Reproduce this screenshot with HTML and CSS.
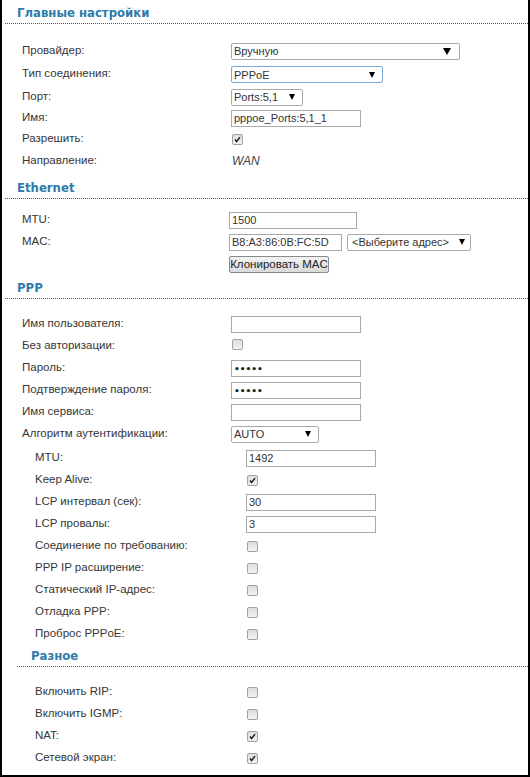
FILE: index.html
```html
<!DOCTYPE html>
<html lang="ru">
<head>
<meta charset="utf-8">
<title>Главные настройки</title>
<link rel="stylesheet" href="styles.css">
</head>
<body>
<div class="frame">
  <h2 class="title">Главные настройки</h2>
  <div class="sec sec-main">
    <div class="row r24"><span class="lbl">Провайдер:</span><div class="sel w229 sel-big"><span>Вручную</span><i class="arr arr-big"></i></div></div>
    <div class="row r23"><span class="lbl">Тип соединения:</span><div class="sel w152 focus"><span>PPPoE</span><i class="arr"></i></div></div>
    <div class="row"><span class="lbl">Порт:</span><div class="sel w72"><span>Ports:5,1</span><i class="arr"></i></div></div>
    <div class="row r21"><span class="lbl">Имя:</span><div class="inp w130">pppoe_Ports:5,1_1</div></div>
    <div class="row r21"><span class="lbl">Разрешить:</span><span class="cb"><svg viewBox="0 0 11 11" class="chk"><path d="M2.3 5.6 L4.4 7.9 L8.6 2.6"/></svg></span></div>
    <div class="row"><span class="lbl">Направление:</span><span class="wan">WAN</span></div>
  </div>

  <h2 class="title">Ethernet</h2>
  <div class="sec sec-eth">
    <div class="row"><span class="lbl">MTU:</span><div class="inp w128">1500</div></div>
    <div class="row"><span class="lbl">MAC:</span><div class="pair"><div class="inp w113">B8:A3:86:0B:FC:5D</div><div class="sel w124 sel-mac"><span>&lt;Выберите адрес&gt;</span><i class="arr"></i></div></div></div>
    <div class="row r23"><span class="lbl"></span><button class="btn" type="button">Клонировать MAC</button></div>
  </div>

  <h2 class="title">PPP</h2>
  <div class="sec sec-ppp">
    <div class="row"><span class="lbl">Имя пользователя:</span><div class="inp w130"></div></div>
    <div class="row"><span class="lbl">Без авторизации:</span><span class="cb up"></span></div>
    <div class="row"><span class="lbl">Пароль:</span><div class="inp w130"><span class="pw">•••••</span></div></div>
    <div class="row"><span class="lbl">Подтверждение пароля:</span><div class="inp w130"><span class="pw">•••••</span></div></div>
    <div class="row"><span class="lbl">Имя сервиса:</span><div class="inp w130"></div></div>
    <div class="row"><span class="lbl">Алгоритм аутентификации:</span><div class="sel w87"><span>AUTO</span><i class="arr"></i></div></div>

    <div class="sub">
      <div class="row"><span class="lbl">MTU:</span><div class="inp w130">1492</div></div>
      <div class="row"><span class="lbl">Keep Alive:</span><span class="cb"><svg viewBox="0 0 11 11" class="chk"><path d="M2.3 5.6 L4.4 7.9 L8.6 2.6"/></svg></span></div>
      <div class="row"><span class="lbl">LCP интервал (сек):</span><div class="inp w130">30</div></div>
      <div class="row"><span class="lbl">LCP провалы:</span><div class="inp w130">3</div></div>
      <div class="row"><span class="lbl">Соединение по требованию:</span><span class="cb"></span></div>
      <div class="row"><span class="lbl">PPP IP расширение:</span><span class="cb"></span></div>
      <div class="row"><span class="lbl">Статический IP-адрес:</span><span class="cb"></span></div>
      <div class="row"><span class="lbl">Отладка PPP:</span><span class="cb"></span></div>
      <div class="row"><span class="lbl">Проброс PPPoE:</span><span class="cb"></span></div>
    </div>

    <h2 class="title title-sub">Разное</h2>
    <div class="sub sec-misc">
      <div class="row"><span class="lbl">Включить RIP:</span><span class="cb"></span></div>
      <div class="row"><span class="lbl">Включить IGMP:</span><span class="cb"></span></div>
      <div class="row"><span class="lbl">NAT:</span><span class="cb"><svg viewBox="0 0 11 11" class="chk"><path d="M2.3 5.6 L4.4 7.9 L8.6 2.6"/></svg></span></div>
      <div class="row"><span class="lbl">Сетевой экран:</span><span class="cb"><svg viewBox="0 0 11 11" class="chk"><path d="M2.3 5.6 L4.4 7.9 L8.6 2.6"/></svg></span></div>
    </div>
  </div>
</div>
</body>
</html>
```

FILE: styles.css
```css
html { overflow: hidden; }
body {
  margin: 0;
  background: #fff;
  font-family: "Liberation Sans", Arial, sans-serif;
  font-size: 11px;
  color: #333;
}
.frame {
  width: 530px;
  height: 777px;
  box-sizing: border-box;
  border: 2px solid #000;
  border-top: 0;
  padding-top: 1px;
  overflow: hidden;
}
.title {
  margin: 0 0 0 3px;
  height: 23px;
  box-sizing: border-box;
  padding: 3px 0 2px 12px;
  border-bottom: 1px dotted #555;
  font-family: "DejaVu Sans Condensed", "DejaVu Sans", sans-serif;
  font-size: 13px;
  line-height: 17px;
  font-weight: bold;
  color: #2f7bab;
}
.title-sub {
  margin-left: 15px;
  margin-right: -2px;
  padding-left: 14px;
  padding-top: 2px;
  height: 22px;
}
.sec-main { padding: 15px 0 4px; }
.sec-eth { padding: 10px 0 0; }
.sec-ppp { padding: 14px 0 0; }
.row {
  display: flex;
  align-items: center;
  height: 22px;
  padding-left: 20px;
}
.r24 { height: 24px; }
.r23 { height: 23px; }
.r21 { height: 21px; }
.lbl {
  width: 209px;
  flex: none;
  margin-bottom: 3px;
  white-space: nowrap;
  font-size: 11.5px;
  color: #363636;
}
.sec-eth .lbl { width: 207px; }
.sub { margin-top: 2px; }
.sub .row { padding-left: 33px; }
.sub .lbl { width: 211px; }
.sec-misc { margin-top: 0; padding: 14px 0 7px; }

.inp {
  height: 17px;
  box-sizing: border-box;
  border: 1px solid #a9a9a9;
  background: #fff;
  padding: 0 2px;
  line-height: 15px;
  color: #333;
  white-space: nowrap;
  overflow: hidden;
}
.w130 { width: 130px; }
.w128 { width: 128px; }
.w113 { width: 113px; }
.w229 { width: 229px; }
.w152 { width: 152px; }
.w72 { width: 72px; }
.w87 { width: 88px; }
.w124 { width: 124px; }

.sel {
  display: flex;
  align-items: center;
  justify-content: space-between;
  height: 17px;
  box-sizing: border-box;
  border: 1px solid #a9a9a9;
  border-radius: 2px;
  background: #fff;
  padding: 0 7px 0 2px;
  color: #333;
  white-space: nowrap;
}
.sel-big { padding-right: 8px; }
.sel-mac { padding-left: 4px; padding-right: 5px; }
.focus { border-color: #7aa7d6; }
.arr {
  width: 0;
  height: 0;
  border-left: 3px solid transparent;
  border-right: 3px solid transparent;
  border-top: 6px solid #000;
}
.arr-big {
  border-left-width: 4px;
  border-right-width: 4px;
  border-top-width: 7px;
}
.pair {
  display: flex;
  gap: 5px;
}
.btn {
  width: 100px;
  height: 17px;
  box-sizing: border-box;
  border: 1px solid #8a8a8a;
  border-radius: 2px;
  background: linear-gradient(#f3f3f3, #dadada);
  padding: 0;
  font: inherit;
  font-size: 11.5px;
  color: #222;
  line-height: 15px;
}
.pw {
  font-family: "DejaVu Sans", sans-serif;
  font-size: 9px;
  font-weight: bold;
  color: #222;
}
.cb {
  display: block;
  width: 11px;
  height: 11px;
  box-sizing: border-box;
  border: 1px solid #a2a2a2;
  border-radius: 2px;
  background: linear-gradient(#dedede, #f2f2f2);
  margin-left: 1px;
}
.cb.up { margin-bottom: 4px; }
.chk {
  display: block;
  width: 9px;
  height: 9px;
  fill: none;
  stroke: #222;
  stroke-width: 1.9;
}
.wan {
  font-style: italic;
  font-size: 12px;
  color: #444;
  margin-left: 1px;
}
```
